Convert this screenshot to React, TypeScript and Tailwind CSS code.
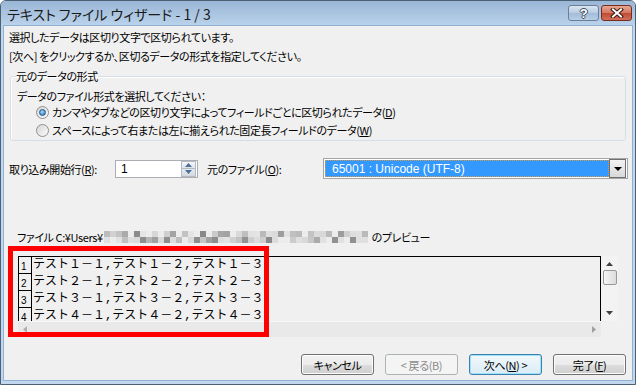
import React from 'react';

const ui = "font-['Noto_Sans_CJK_JP',sans-serif] [font-feature-settings:'palt'] text-[11px] tracking-[-0.4px] leading-[16px] text-black";

// mosaic shades for the blurred path (deterministic)
const shades: number[][] = (() => {
  let seed = 7;
  const rnd = () => {
    seed = (seed * 1103515245 + 12345) % 2147483648;
    return seed / 2147483648;
  };
  return [0, 1].map(() =>
    Array.from({ length: 44 }, () => {
      const r = rnd();
      if (r < 0.18) return 236;
      if (r < 0.5) return 215 + Math.floor(rnd() * 15);
      if (r < 0.8) return 180 + Math.floor(rnd() * 30);
      return 130 + Math.floor(rnd() * 45);
    })
  );
})();

const Radio = ({ checked }: { checked?: boolean }) => (
  <span className="flex h-[13px] w-[13px] shrink-0 items-center justify-center rounded-full border border-[#8f8f8f] bg-gradient-to-br from-[#d6d6d6] to-[#fbfbfb]">
    {checked && (
      <span className="h-[7px] w-[7px] rounded-full border border-[#22578a] bg-[radial-gradient(circle_at_40%_35%,#9bd8ff,#2a6fb5)]" />
    )}
  </span>
);

const Button = ({ label, variant }: { label: React.ReactNode; variant?: 'disabled' | 'default' }) => {
  const base = 'flex h-[21px] w-[73px] items-center justify-center rounded-[3px] border';
  if (variant === 'disabled')
    return <div className={`${base} border-[#adb2b5] bg-[#f4f4f4] text-[#8b8b8b]`}>{label}</div>;
  if (variant === 'default')
    return (
      <div className={`${base} border-[#3c7fb1] bg-gradient-to-b from-[#f2f8fb] to-[#d9ecf7] shadow-[inset_0_0_0_1px_#9ee3fa]`}>
        {label}
      </div>
    );
  return (
    <div className={`${base} border-[#707070] bg-[linear-gradient(#f2f2f2_0%,#ebebeb_50%,#dddddd_50%,#cfcfcf_100%)] shadow-[inset_0_0_0_1px_#fcfcfc]`}>
      {label}
    </div>
  );
};

const rows = [1, 2, 3, 4];

export default function App() {
  return (
    <div className={`${ui} flex h-[385px] w-[636px] flex-col overflow-hidden rounded-t-[6px] border border-[#4d5f73] bg-[#c2d7ed]`}>
      {/* title bar */}
      <div className="flex h-[24px] shrink-0 items-start bg-gradient-to-b from-[#9ab6d6] to-[#bad2ea] pl-[6px] pr-[3px]">
        <span className="mt-[4px] text-[14px] leading-[18px] tracking-normal text-[#1a1a1a]">テキスト ファイル ウィザード - 1 / 3</span>
        <div className="ml-auto mt-[4px] flex gap-[2px]">
          <div className="flex h-[16px] w-[31px] items-center justify-center rounded-[3px] border border-[#6d7f96] bg-[linear-gradient(#d9e5f2_0%,#b7cbe2_50%,#a2bbd7_50%,#b7cfe8_100%)]">
            <span className="font-['Liberation_Sans',sans-serif] text-[13px] font-bold leading-none text-white [text-shadow:-1px_0_#3d4b5c,1px_0_#3d4b5c,0_-1px_#3d4b5c,0_1px_#3d4b5c]">?</span>
          </div>
          <div className="flex h-[16px] w-[31px] items-center justify-center rounded-[3px] border border-[#7a2b1f] bg-[linear-gradient(#e8a792_0%,#d47561_50%,#c04a32_50%,#d0705a_100%)]">
            <svg width="14" height="10" viewBox="0 0 14 10">
              <path d="M3 1.5 L11 8.5 M11 1.5 L3 8.5" stroke="#3b1610" strokeWidth="4" strokeLinecap="square" />
              <path d="M3 1.5 L11 8.5 M11 1.5 L3 8.5" stroke="#ffffff" strokeWidth="2" strokeLinecap="square" />
            </svg>
          </div>
        </div>
      </div>

      {/* body */}
      <div className="flex flex-1 flex-col px-[2px] pb-[3px]">
        <div className="relative flex flex-1 flex-col border border-[#8fb2d4] bg-[#f0f0f0] pt-[3px]">
          <div className="pl-[5px]">選択したデータは区切り文字で区切られています。</div>
          <div className="mt-[3px] pl-[5px]">[次へ] をクリックするか、区切るデータの形式を指定してください。</div>

          <fieldset className="mx-[6px] mt-[4px] rounded-[3px] border border-[#d5dfe5] pb-[2px] pl-[5px] pr-[5px] shadow-[inset_1px_1px_0_#ffffff]">
            <legend className="px-0">元のデータの形式</legend>
            <div className="mt-[4px] pl-[1px]">データのファイル形式を選択してください：</div>
            <div className="flex items-center gap-[3px] pl-[20px]">
              <Radio checked />
              <span>
                カンマやタブなどの区切り文字によってフィールドごとに区切られたデータ(<u>D</u>)
              </span>
            </div>
            <div className="mt-[2px] flex items-center gap-[3px] pl-[20px]">
              <Radio />
              <span>
                スペースによって右または左に揃えられた固定長フィールドのデータ(<u>W</u>)
              </span>
            </div>
          </fieldset>

          {/* start row + origin */}
          <div className="mt-[17px] flex h-[21px] items-center pl-[5px]">
            <span className="w-[106px]">
              取り込み開始行(<u>R</u>):
            </span>
            <div className="flex h-[18px] w-[83px] items-center border border-[#abadb3] bg-white pl-[5px]">
              <span className="flex-1 font-['Liberation_Sans',sans-serif] text-[12px]">1</span>
              <div className="mr-[1px] flex h-[16px] w-[15px] flex-col">
                <div className="flex flex-1 items-center justify-center border border-[#b5b9c0] bg-gradient-to-b from-[#f4f6f9] to-[#dfe4ea]">
                  <svg width="7" height="4" viewBox="0 0 7 4"><path d="M3.5 0 L7 4 L0 4 Z" fill="#4c6f9c" /></svg>
                </div>
                <div className="flex flex-1 items-center justify-center border border-t-0 border-[#b5b9c0] bg-gradient-to-b from-[#e7ebf0] to-[#d3d9e1]">
                  <svg width="7" height="4" viewBox="0 0 7 4"><path d="M0 0 L7 0 L3.5 4 Z" fill="#4c6f9c" /></svg>
                </div>
              </div>
            </div>
            <span className="ml-[9px] w-[116px]">
              元のファイル(<u>O</u>):
            </span>
            <div className="flex h-[21px] w-[305px] items-center border border-[#a5a5a5] bg-white p-[1px]">
              <div className="flex h-full flex-1 items-center border border-dotted border-[#d59a4a] bg-[#3399ff] pl-[6px] font-['Liberation_Sans',sans-serif] text-[12px] tracking-normal text-white">
                65001 : Unicode (UTF-8)
              </div>
              <div className="flex h-[19px] w-[17px] items-center justify-center border border-[#707070] bg-gradient-to-b from-[#f3f3f3] to-[#d8d8d8]">
                <svg width="8" height="4" viewBox="0 0 8 4"><path d="M0 0 L8 0 L4 4 Z" fill="#000" /></svg>
              </div>
            </div>
          </div>

          {/* file label */}
          <div className="mt-[50px] flex items-center pl-[13px]">
            <span>ファイル C:¥Users¥</span>
            <div className="ml-[1px] flex w-[264px] flex-col">
              {shades.map((row, r) => (
                <div key={r} className="flex h-[6px]">
                  {row.map((s, i) => (
                    <div key={i} className="h-[6px] w-[6px]" style={{ backgroundColor: `rgb(${s},${s},${s})` }} />
                  ))}
                </div>
              ))}
            </div>
            <span className="ml-[4px]">のプレビュー</span>
          </div>

          {/* preview */}
          <div className="ml-[14px] mt-[11px] flex w-[600px] flex-col">
            <div className="flex h-[65px]">
              <div className="flex-1 overflow-hidden border-l border-r border-t border-black bg-[#f0f0f0]">
                {rows.map((n) => (
                  <div key={n} className="flex h-[17px] items-stretch">
                    <div className="flex w-[13px] shrink-0 items-end border-b border-r border-black pb-[1px] pl-[2px] font-['Liberation_Sans',sans-serif] text-[10px] leading-[11px] tracking-normal">
                      {n}
                    </div>
                    <div className="pl-[1px] font-['Liberation_Mono','Noto_Sans_CJK_JP',monospace] text-[12px] leading-[17px] tracking-normal [font-feature-settings:normal]">
                      テスト{String.fromCharCode(0xff10 + n)}－１,テスト{String.fromCharCode(0xff10 + n)}－２,テスト{String.fromCharCode(0xff10 + n)}－３
                    </div>
                  </div>
                ))}
              </div>
              <div className="flex w-[17px] flex-col items-center bg-[#f3f3f3]">
                <svg className="mt-[6px]" width="7" height="4" viewBox="0 0 7 4"><path d="M3.5 0 L7 4 L0 4 Z" fill="#404040" /></svg>
                <div className="mt-[4px] h-[15px] w-[14px] rounded-[2px] border border-[#989898] bg-gradient-to-r from-[#f6f6f6] to-[#dcdcdc]" />
                <svg className="mt-auto mb-[6px]" width="7" height="4" viewBox="0 0 7 4"><path d="M0 0 L7 0 L3.5 4 Z" fill="#404040" /></svg>
              </div>
            </div>
            <div className="flex h-[16px]">
              <div className="flex flex-1 items-center justify-between border-t border-[#f8f8f8] bg-[#e9e9e9] px-[5px]">
                <svg width="4" height="7" viewBox="0 0 4 7"><path d="M4 0 L4 7 L0 3.5 Z" fill="#b0b0b0" /></svg>
                <svg width="4" height="7" viewBox="0 0 4 7"><path d="M0 0 L4 3.5 L0 7 Z" fill="#a0a0a0" /></svg>
              </div>
              <div className="w-[17px]" />
            </div>
          </div>

          {/* buttons */}
          <div className="mt-[17px] flex justify-end gap-[11px] pr-[6px]">
            <Button label="キャンセル" />
            <Button label="< 戻る(B)" variant="disabled" />
            <Button label={<span>次へ(<u>N</u>) &gt;</span>} variant="default" />
            <Button label={<span>完了(<u>F</u>)</span>} />
          </div>

          {/* red annotation */}
          <div className="absolute left-[4px] top-[220px] h-[91px] w-[261px] border-[5px] border-[#ff0000]" />
        </div>
      </div>
    </div>
  );
}
